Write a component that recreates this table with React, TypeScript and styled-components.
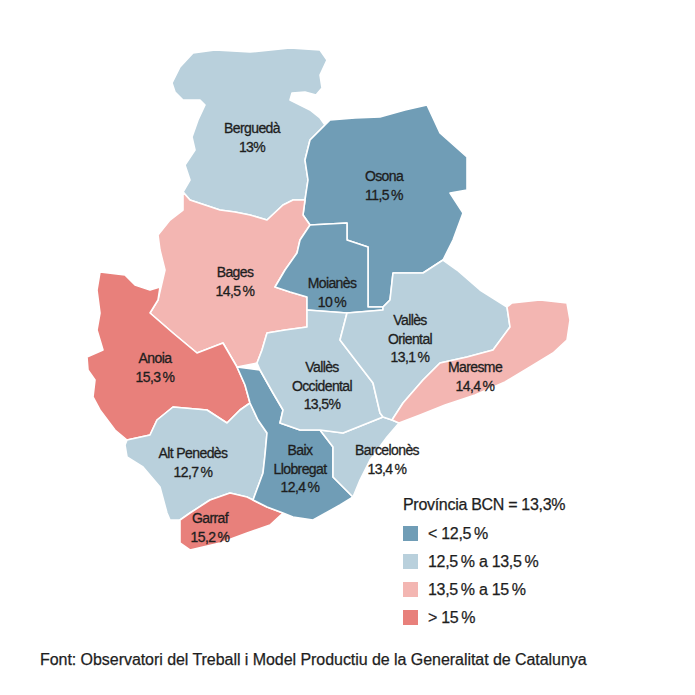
import { createGlobalStyle, styled } from 'styled-components';

const GlobalStyle = createGlobalStyle`
  html, body {
    margin: 0;
    padding: 0;
    background: #ffffff;
  }
  body {
    font-family: 'Liberation Sans', Arial, sans-serif;
    color: #1e1e1e;
  }
`;

type Tone = 'low' | 'mid' | 'high' | 'top';

const tones: Record<Tone, string> = {
  low: '#709db6',
  mid: '#b9d0dc',
  high: '#f3b6b2',
  top: '#e8807b',
};

const Page = styled.div`
  width: 695px;
  height: 695px;
  display: flex;
  flex-direction: column;
  overflow: hidden;
`;

const MapArea = styled.div`
  position: relative;
  width: 695px;
  height: 650px;
`;

const MapSvg = styled.svg`
  display: block;
  width: 695px;
  height: 650px;
`;

const Region = styled.polygon<{ $tone: Tone }>`
  fill: ${(p) => tones[p.$tone]};
  stroke: #ffffff;
  stroke-width: 1.6;
  stroke-linejoin: round;
`;

const Label = styled.text`
  font-family: 'Liberation Sans', Arial, sans-serif;
  font-size: 14px;
  fill: #1e1e1e;
  stroke: #1e1e1e;
  stroke-width: 0.3px;
  text-anchor: middle;
  letter-spacing: -0.6px;
`;

const Legend = styled.div`
  position: absolute;
  left: 403px;
  top: 496px;
  display: flex;
  flex-direction: column;
  gap: 11px;
`;

const LegendTitle = styled.div`
  font-size: 16px;
  line-height: 17px;
  letter-spacing: -0.3px;
  -webkit-text-stroke: 0.25px #1e1e1e;
  margin-bottom: 1px;
`;

const LegendRow = styled.div`
  display: flex;
  align-items: center;
  gap: 10px;
  font-size: 16px;
  line-height: 17px;
  letter-spacing: -0.3px;
  -webkit-text-stroke: 0.25px #1e1e1e;
`;

const Swatch = styled.span<{ $tone: Tone }>`
  width: 15px;
  height: 15px;
  background: ${(p) => tones[p.$tone]};
`;

const Source = styled.div`
  padding-left: 40px;
  font-size: 16px;
  line-height: 20px;
  letter-spacing: -0.05px;
  -webkit-text-stroke: 0.25px #1e1e1e;
`;

const regions: { name: string; tone: Tone; points: string }[] = [
  {
    name: 'Bergueda',
    tone: 'mid',
    points:
      '193,53 215,50 250,52 290,48 320,50 327,60 320,75 322,88 316,95 305,92 292,93 290,100 300,105 310,110 320,118 325,125 310,140 305,160 308,180 305,200 293,200 283,205 267,220 250,215 235,212 220,210 205,205 190,200 183,192 190,180 185,165 195,150 192,137 198,120 205,105 200,100 183,100 175,92 172,83 180,67',
  },
  {
    name: 'Osona',
    tone: 'low',
    points:
      '330,120 355,118 380,117 405,110 427,105 440,133 467,157 467,190 450,193 463,213 453,240 443,260 423,273 393,273 390,300 383,307 368,307 368,247 347,240 347,223 310,225 303,215 305,200 308,180 305,160 310,140 325,125',
  },
  {
    name: 'Bages',
    tone: 'high',
    points:
      '190,200 205,205 220,210 235,212 250,215 267,220 283,205 293,200 305,200 303,215 310,225 300,240 297,253 285,270 275,287 290,292 307,297 307,310 307,327 285,330 267,333 262,350 257,363 237,367 223,343 197,353 173,333 150,313 158,300 165,270 160,250 158,235 170,220 183,210 183,192',
  },
  {
    name: 'Moianes',
    tone: 'low',
    points:
      '310,225 347,223 347,240 368,247 368,280 368,307 383,307 383,310 347,313 307,310 307,297 290,292 275,287 285,270 297,253 300,240',
  },
  {
    name: 'Anoia',
    tone: 'top',
    points:
      '100,272 125,275 135,285 150,290 160,287 158,300 150,313 173,333 197,353 223,343 237,367 245,385 250,403 240,410 227,423 207,410 173,407 157,420 150,435 127,440 115,430 100,410 93,397 95,380 88,370 87,357 103,350 97,330 100,313 97,290',
  },
  {
    name: 'AltPenedes',
    tone: 'mid',
    points:
      '127,440 150,435 157,420 173,407 207,410 227,423 240,410 250,403 258,420 267,433 265,455 263,473 253,500 247,497 230,493 210,500 190,513 180,520 170,520 167,513 160,487 143,467 127,457 125,445',
  },
  {
    name: 'Garraf',
    tone: 'top',
    points:
      '190,513 210,500 230,493 247,497 253,500 267,507 283,513 270,525 247,533 220,543 190,550 180,543 180,520',
  },
  {
    name: 'BaixLlobregat',
    tone: 'low',
    points:
      '237,367 260,370 273,393 283,410 280,423 300,430 320,430 333,447 333,477 353,497 340,505 313,520 293,517 283,513 267,507 253,500 263,473 265,455 267,433 258,420 250,403 245,385',
  },
  {
    name: 'Barcelones',
    tone: 'mid',
    points:
      '320,430 343,433 383,417 392,420 399,423 387,437 370,460 360,480 353,497 333,477 333,447',
  },
  {
    name: 'VallesOccidental',
    tone: 'mid',
    points:
      '307,310 347,313 340,340 353,357 373,383 380,413 383,417 343,433 320,430 300,430 280,423 283,410 273,393 260,370 257,363 262,350 267,333 285,330 307,327',
  },
  {
    name: 'VallesOriental',
    tone: 'mid',
    points:
      '347,313 383,310 383,307 390,300 393,273 423,273 443,260 457,270 480,290 507,307 510,327 493,350 467,357 440,363 423,380 403,403 392,420 383,417 380,413 373,383 353,357 340,340',
  },
  {
    name: 'Maresme',
    tone: 'high',
    points:
      '507,307 512,303 540,300 567,303 570,320 567,340 553,353 530,367 505,382 475,395 445,405 420,415 399,423 392,420 403,403 423,380 440,363 467,357 493,350 510,327',
  },
];

const labels: { x: number; lines: string[]; y: number }[] = [
  { x: 252, y: 133, lines: ['Berguedà', '13%'] },
  { x: 384, y: 181, lines: ['Osona', '11,5\u2009%'] },
  { x: 235, y: 277, lines: ['Bages', '14,5\u2009%'] },
  { x: 332, y: 288, lines: ['Moianès', '10\u2009%'] },
  { x: 410, y: 325, lines: ['Vallès', 'Oriental', '13,1\u2009%'] },
  { x: 475, y: 372, lines: ['Maresme', '14,4\u2009%'] },
  { x: 155, y: 363, lines: ['Anoia', '15,3\u2009%'] },
  { x: 322, y: 372, lines: ['Vallès', 'Occidental', '13,5%'] },
  { x: 193, y: 458, lines: ['Alt Penedès', '12,7\u2009%'] },
  { x: 300, y: 455, lines: ['Baix', 'Llobregat', '12,4\u2009%'] },
  { x: 387, y: 455, lines: ['Barcelonès', '13,4\u2009%'] },
  { x: 210, y: 523, lines: ['Garraf', '15,2\u2009%'] },
];

const legend: { tone: Tone; text: string }[] = [
  { tone: 'low', text: '< 12,5\u2009%' },
  { tone: 'mid', text: '12,5\u2009% a 13,5\u2009%' },
  { tone: 'high', text: '13,5\u2009% a 15\u2009%' },
  { tone: 'top', text: '> 15\u2009%' },
];

export default function App() {
  return (
    <Page>
      <GlobalStyle />
      <MapArea>
        <MapSvg viewBox="0 0 695 650">
          {regions.map((r) => (
            <Region key={r.name} $tone={r.tone} points={r.points} />
          ))}
          {labels.map((l) => (
            <Label key={l.lines[0] + l.x} x={l.x} y={l.y}>
              {l.lines.map((line, i) => (
                <tspan key={line} x={l.x} dy={i === 0 ? 0 : 18.5}>
                  {line}
                </tspan>
              ))}
            </Label>
          ))}
        </MapSvg>
        <Legend>
          <LegendTitle>Província BCN = 13,3%</LegendTitle>
          {legend.map((item) => (
            <LegendRow key={item.tone}>
              <Swatch $tone={item.tone} />
              {item.text}
            </LegendRow>
          ))}
        </Legend>
      </MapArea>
      <Source>
        Font: Observatori del Treball i Model Productiu de la Generalitat de Catalunya
      </Source>
    </Page>
  );
}
